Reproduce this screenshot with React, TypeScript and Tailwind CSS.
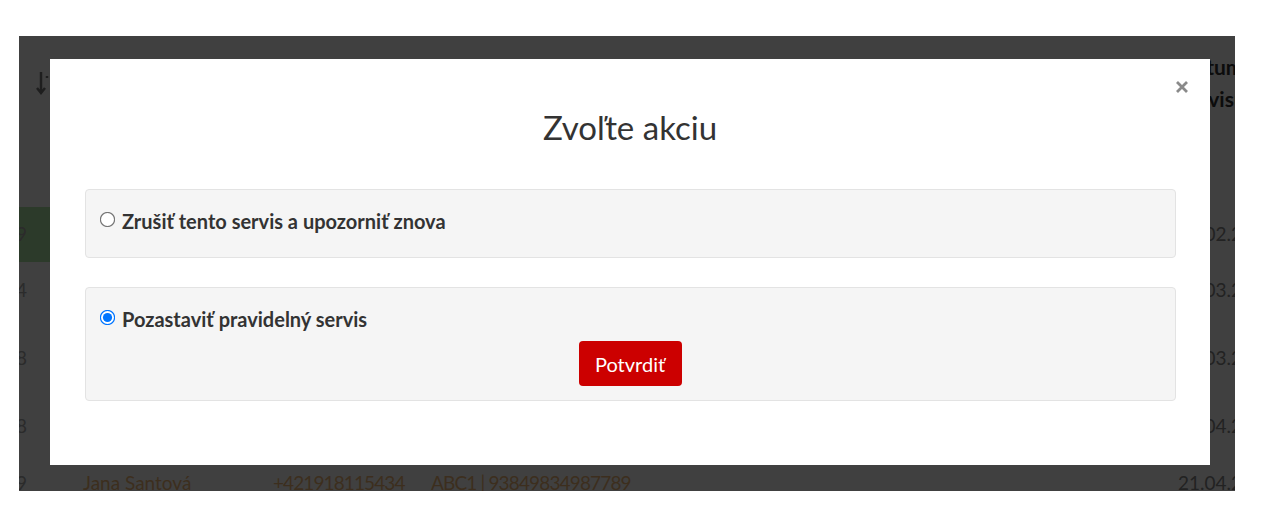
import React from "react";

const rows = [
  { h: "h-[55px]", num: "9", green: true, date: "12.02.2024", name: "", phone: "", code: "" },
  { h: "h-[56px]", num: "4", green: false, date: "14.03.2024", name: "", phone: "", code: "" },
  { h: "h-[80px]", num: "8", green: false, date: "18.03.2024", name: "", phone: "", code: "" },
  { h: "h-[56px]", num: "8", green: false, date: "02.04.2024", name: "", phone: "", code: "" },
  { h: "h-[58px]", num: "9", green: false, date: "21.04.2024", name: "Jana Santová", phone: "+421918115434", code: "ABC1 | 93849834987789" },
];

export default function App() {
  return (
    <div className="w-[1262px] h-[519px] bg-white pt-[36px] pl-[19px] font-['Lato','Liberation_Sans',sans-serif]">
      <div className="relative w-[1216px] h-[455px] overflow-hidden bg-white">
        {/* background table */}
        <div className="flex flex-col text-[19px]">
          <div className="h-[171px] flex">
            <div className="w-[64px] pt-[34px] pl-[17px] text-[#777]">
              <svg width="14" height="26" viewBox="0 0 14 26" fill="none" stroke="currentColor" strokeWidth="2.5">
                <path d="M5 2v21M1 18l4 5 4-5" />
                <path d="M11 6v2" />
              </svg>
            </div>
            <div className="flex-1" />
            <div className="w-[57px] pt-[15px] pl-[2px] leading-[32px] text-[21px] font-bold text-[#333] whitespace-nowrap">
              Dátum
              <br />
              servisu
            </div>
          </div>
          {rows.map((r, i) => (
            <div key={i} className={`${r.h} flex items-center whitespace-nowrap`}>
              <div className={`w-[64px] h-full flex items-center ${r.green ? "bg-[#b0e8a8]" : ""}`}>
                <span className="-ml-[3px] text-[#aaa]">{r.num}</span>
              </div>
              <div className="w-[190px] text-[#f0b878]">{r.name}</div>
              <div className="w-[158px] text-[#f0b878] tracking-[-0.9px]">{r.phone}</div>
              <div className="flex-1 text-[#f0b878] tracking-[-0.85px]">{r.code}</div>
              <div className="w-[57px] text-[#888]">{r.date}</div>
            </div>
          ))}
        </div>

        {/* overlay */}
        <div className="absolute inset-0 bg-black/75" />

        {/* modal */}
        <div className="absolute left-[31px] top-[23px] w-[1160px] h-[406px] bg-white">
          <button className="absolute top-[22px] right-[22px] w-[12px] h-[12px] text-[#8a8a8a]" aria-label="Zavrieť">
            <svg width="12" height="12" viewBox="0 0 12 12" stroke="currentColor" strokeWidth="2.8" strokeLinecap="butt">
              <path d="M1 1l10 10M11 1L1 11" />
            </svg>
          </button>
          <h2 className="pt-[48px] text-center text-[33px] leading-[40px] text-[#333]">Zvoľte akciu</h2>
          <div className="mt-[42px] pl-[35px] pr-[34px] flex flex-col gap-[29px]">
            <div className="h-[69px] bg-[#f5f5f5] border border-[#e3e3e3] rounded-[4px] pt-[19px] pl-[15px]">
              <label className="flex items-center gap-[8px] h-[24px] text-[20px] font-bold text-[#333]">
                <input type="radio" name="a" className="w-[13px] h-[13px] m-0 -mt-[3px] scale-[1.18]" />
                Zrušiť tento servis a upozorniť znova
              </label>
            </div>
            <div className="h-[114px] bg-[#f5f5f5] border border-[#e3e3e3] rounded-[4px] pt-[19px] pl-[15px]">
              <label className="flex items-center gap-[8px] h-[24px] text-[20px] font-bold text-[#333]">
                <input type="radio" name="a" defaultChecked className="w-[13px] h-[13px] m-0 -mt-[3px] scale-[1.18]" />
                Pozastaviť pravidelný servis
              </label>
              <div className="flex justify-center pr-[16px] mt-[10px]">
                <button className="w-[103px] h-[45px] bg-[#cc0000] text-white rounded-[4px] text-[20px]">
                  Potvrdiť
                </button>
              </div>
            </div>
          </div>
        </div>
      </div>
    </div>
  );
}
